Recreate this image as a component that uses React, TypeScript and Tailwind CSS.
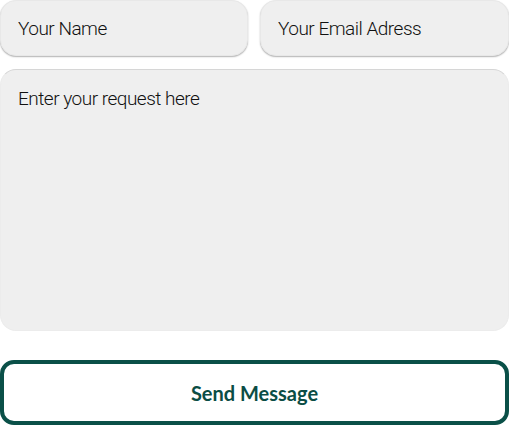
export default function App() {
  return (
    <div className="w-[509px] h-[426px] bg-white flex flex-col" style={{ fontFamily: "Roboto, sans-serif" }}>
      <div className="flex gap-[12px]">
        <input
          placeholder="Your Name"
          className="w-[248px] min-w-0 h-[56px] rounded-[16px] bg-[#efefef] px-[17px] text-[19px] tracking-[-0.5px] font-light text-[#111] placeholder:text-[#111] outline-none border border-[#e8e8e8] shadow-[0_1px_1.5px_rgba(0,0,0,0.3)]"
        />
        <input
          placeholder="Your Email Adress"
          className="flex-1 min-w-0 h-[56px] rounded-[16px] bg-[#efefef] px-[17px] text-[19px] tracking-[-0.5px] font-light text-[#111] placeholder:text-[#111] outline-none border border-[#e8e8e8] shadow-[0_1px_1.5px_rgba(0,0,0,0.3)]"
        />
      </div>
      <textarea
        placeholder="Enter your request here"
        className="mt-[13px] w-full h-[262px] resize-none rounded-[16px] bg-[#efefef] px-[17px] pt-[15px] text-[19px] tracking-[-0.5px] font-light text-[#111] placeholder:text-[#111] outline-none border-t border-[#d6d6d6] border-x-[#ececec] border-x border-b border-b-[#ececec]"
      />
      <button
        className="mt-[29px] w-full h-[65px] rounded-[14px] border-[4px] border-[#0a5048] bg-white text-[#0b4d45] text-[20px] font-bold"
        style={{ fontFamily: "Lato, sans-serif" }}
      >
        Send Message
      </button>
    </div>
  );
}
